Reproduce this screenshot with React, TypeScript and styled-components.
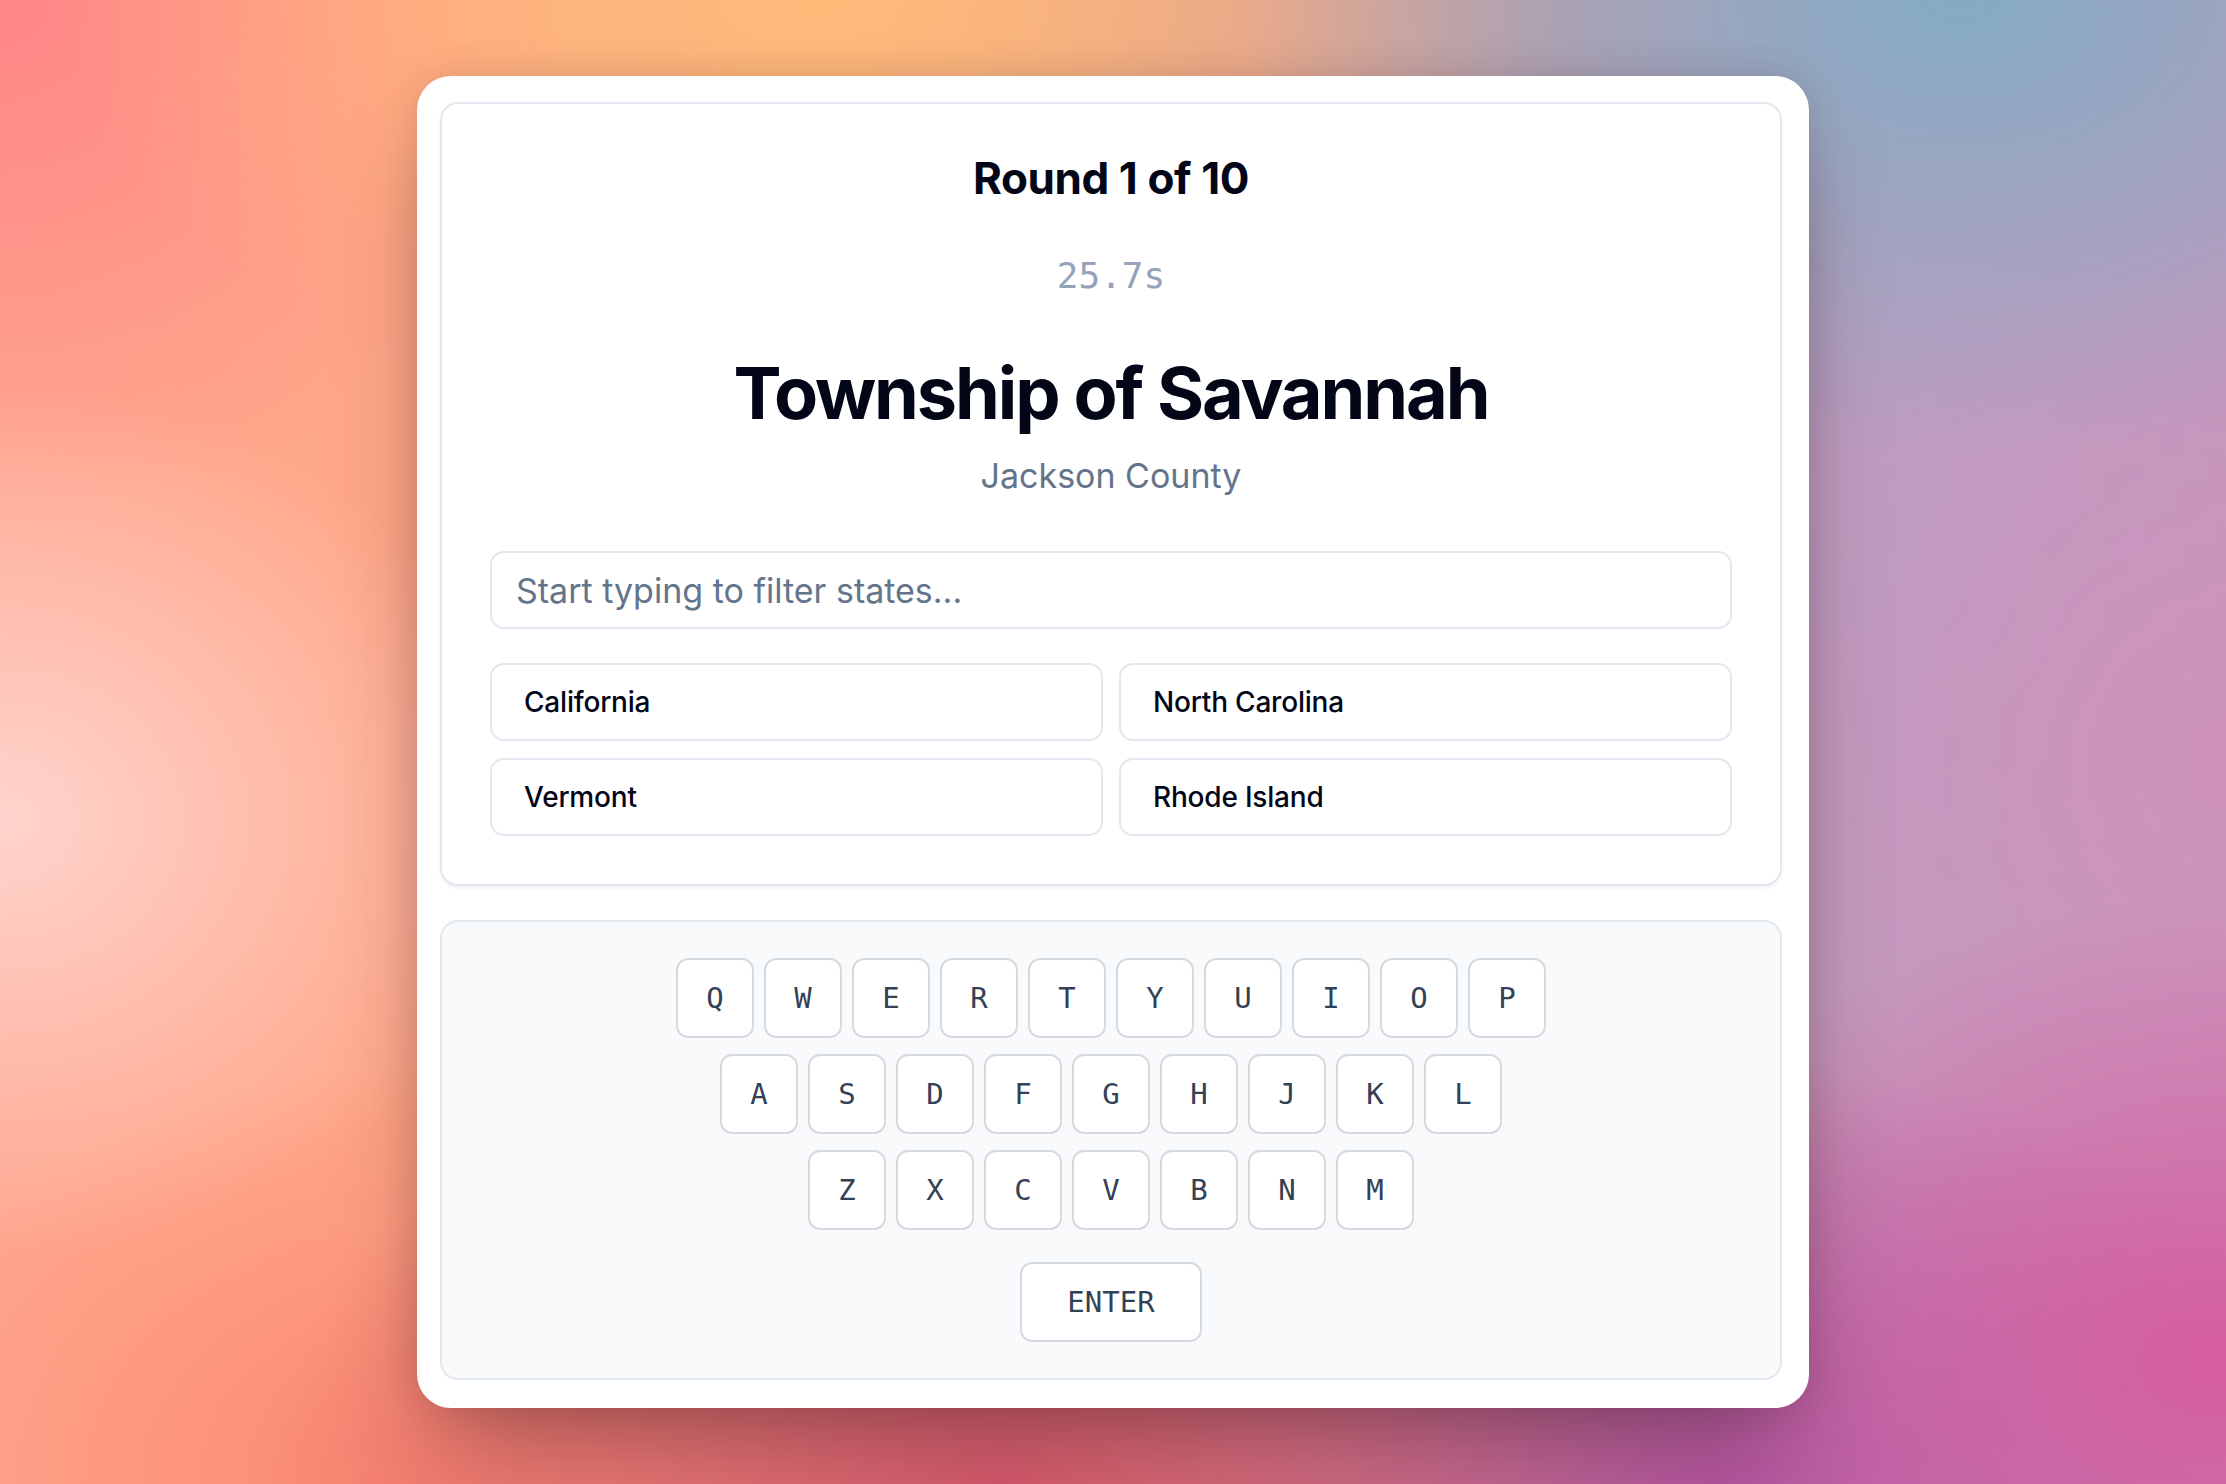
import React from "react";
import styled, { createGlobalStyle } from "styled-components";

const GlobalStyle = createGlobalStyle`
  html, body {
    margin: 0;
    padding: 0;
  }
  body {
    font-family: Inter, "Noto Sans", "Liberation Sans", sans-serif;
    -webkit-font-smoothing: antialiased;
  }
  *, *::before, *::after {
    box-sizing: border-box;
  }
`;

const Page = styled.main`
  min-height: 100vh;
  display: flex;
  align-items: center;
  justify-content: center;
  background:
    radial-gradient(520px 440px at 0px 820px, #ffd4cd 0%, rgba(255, 212, 205, 0) 100%),
    radial-gradient(720px 460px at 1960px 0px, #84abc3 0%, rgba(132, 171, 195, 0) 100%),
    radial-gradient(760px 420px at 820px 0px, #ffbb79 0%, rgba(255, 187, 121, 0) 100%),
    radial-gradient(560px 520px at 0px 0px, #ff8686 0%, rgba(255, 134, 134, 0) 100%),
    radial-gradient(640px 460px at 2226px 1360px, #d65c9e 0%, rgba(214, 92, 158, 0) 100%),
    radial-gradient(760px 420px at 1000px 1484px, #d65a6c 0%, rgba(214, 90, 108, 0) 100%),
    radial-gradient(640px 420px at 1720px 1484px, #ad55a2 0%, rgba(173, 85, 162, 0) 100%),
    radial-gradient(560px 420px at 420px 1484px, #fb8870 0%, rgba(251, 136, 112, 0) 100%),
    radial-gradient(620px 620px at 2226px 760px, #cf92bc 0%, rgba(207, 146, 188, 0) 100%),
    radial-gradient(560px 600px at 1900px 560px, #b8a0c2 0%, rgba(184, 160, 194, 0) 100%),
    linear-gradient(to right, #ffa68e 0%, #ffa887 20%, #e8a088 45%, #c89aa8 70%, #c29cbe 85%, #c498bc 100%);
`;

const Card = styled.div`
  width: 1392px;
  background: #ffffff;
  border-radius: 34px;
  padding: 26px 27px 28px 23px;
  display: flex;
  flex-direction: column;
  gap: 34px;
  box-shadow: 0 50px 100px -24px rgba(40, 10, 20, 0.38), 0 0 36px rgba(60, 20, 30, 0.12);
`;

const QuestionPanel = styled.section`
  background: #ffffff;
  border: 2px solid #e2e8f0;
  border-radius: 18px;
  padding: 48px;
  display: flex;
  flex-direction: column;
  align-items: center;
  box-shadow: 0 2px 4px rgba(15, 23, 42, 0.06);
`;

const RoundTitle = styled.h2`
  margin: 0;
  font-size: 44px;
  line-height: 52px;
  font-weight: 700;
  letter-spacing: -0.4px;
  color: #020617;
`;

const Timer = styled.div`
  margin-top: 52px;
  font-family: "DejaVu Sans Mono", "Liberation Mono", monospace;
  font-size: 36px;
  line-height: 40px;
  color: #94a3b8;
`;

const PlaceName = styled.h1`
  margin: 57px 0 0;
  font-size: 72px;
  line-height: 80px;
  font-weight: 700;
  letter-spacing: -2.1px;
  color: #020617;
`;

const CountyName = styled.p`
  margin: 21px 0 0;
  font-size: 34px;
  line-height: 44px;
  font-weight: 400;
  color: #64748b;
`;

const FilterInput = styled.input`
  margin-top: 53px;
  width: 100%;
  height: 78px;
  padding: 0 24px;
  border: 2px solid #e2e8f0;
  border-radius: 14px;
  background: #ffffff;
  font-family: Inter, "Noto Sans", sans-serif;
  font-size: 34px;
  color: #020617;
  outline: none;
  &::placeholder {
    color: #64748b;
  }
`;

const OptionGrid = styled.div`
  margin-top: 34px;
  width: 100%;
  display: grid;
  grid-template-columns: 1fr 1fr;
  column-gap: 16px;
  row-gap: 17px;
`;

const OptionButton = styled.button`
  height: 78px;
  padding: 0 32px;
  text-align: left;
  background: #ffffff;
  border: 2px solid #e2e8f0;
  border-radius: 14px;
  font-family: Inter, "Noto Sans", sans-serif;
  font-size: 28px;
  font-weight: 500;
  letter-spacing: -0.2px;
  color: #020617;
  cursor: pointer;
`;

const KeyboardPanel = styled.section`
  background: #f8fafc;
  border: 2px solid #e2e8f0;
  border-radius: 18px;
  padding: 36px;
  display: flex;
  flex-direction: column;
  align-items: center;
  gap: 16px;
`;

const KeyRow = styled.div`
  display: flex;
  gap: 10px;
`;

const Key = styled.button<{ $wide?: boolean }>`
  width: ${(p) => (p.$wide ? "182px" : "78px")};
  height: 80px;
  margin-top: ${(p) => (p.$wide ? "16px" : "0")};
  padding: 0;
  display: flex;
  align-items: center;
  justify-content: center;
  background: #ffffff;
  border: 2px solid #d5d9e0;
  border-radius: 12px;
  font-family: "DejaVu Sans Mono", "Liberation Mono", monospace;
  font-size: 29px;
  color: #334155;
  cursor: pointer;
`;

const rows = ["QWERTYUIOP", "ASDFGHJKL", "ZXCVBNM"];
const options = ["California", "North Carolina", "Vermont", "Rhode Island"];

export default function App() {
  return (
    <>
      <GlobalStyle />
      <Page>
        <Card>
          <QuestionPanel>
            <RoundTitle>Round 1 of 10</RoundTitle>
            <Timer>25.7s</Timer>
            <PlaceName>Township of Savannah</PlaceName>
            <CountyName>Jackson County</CountyName>
            <FilterInput placeholder="Start typing to filter states..." />
            <OptionGrid>
              {options.map((o) => (
                <OptionButton key={o}>{o}</OptionButton>
              ))}
            </OptionGrid>
          </QuestionPanel>
          <KeyboardPanel>
            {rows.map((r) => (
              <KeyRow key={r}>
                {r.split("").map((c) => (
                  <Key key={c}>{c}</Key>
                ))}
              </KeyRow>
            ))}
            <Key $wide>ENTER</Key>
          </KeyboardPanel>
        </Card>
      </Page>
    </>
  );
}
